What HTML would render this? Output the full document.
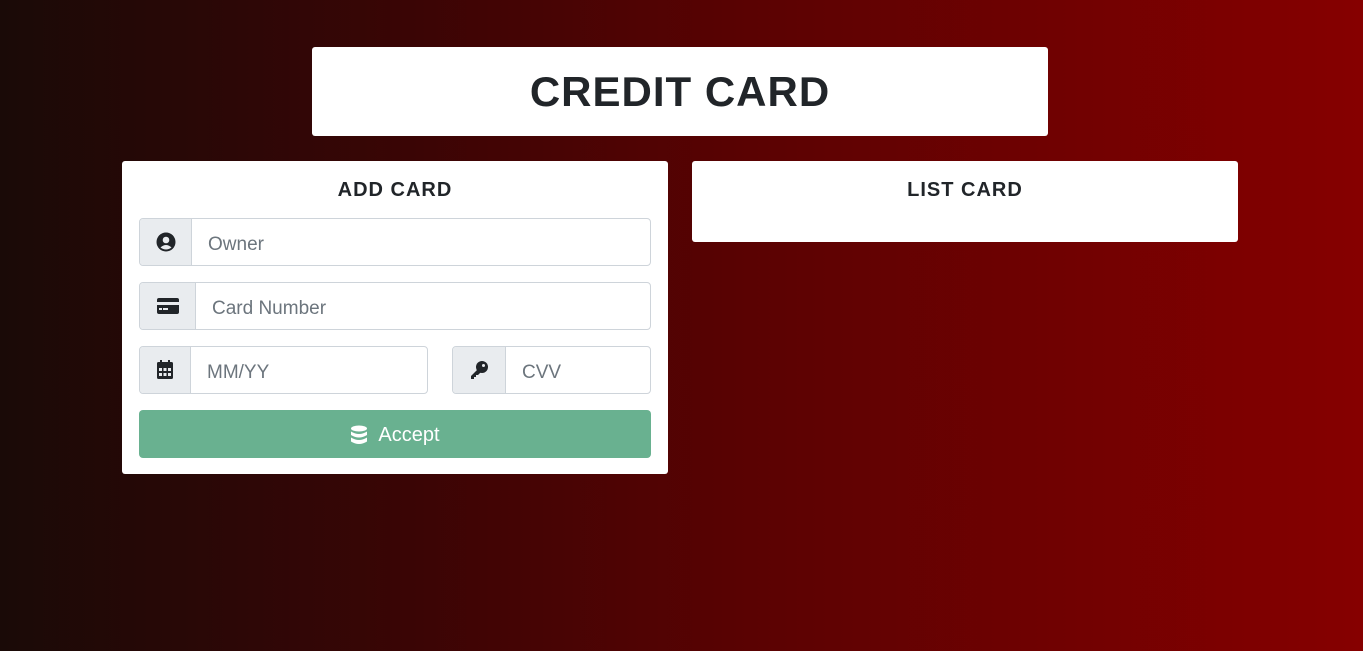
<!DOCTYPE html>
<html><head><style>
*{box-sizing:border-box;margin:0;padding:0}
body{width:1363px;height:651px;overflow:hidden;background:linear-gradient(to right,#1a0a07 0%,#3a0505 30%,#5a0202 55%,#860000 100%);font-family:"Liberation Sans",sans-serif;position:relative}
.box{position:absolute;background:#fff;border-radius:3px}
.h{font-weight:bold;color:#212529;text-align:center;text-transform:uppercase}
.ig{position:absolute;height:48px;border:1px solid #ced4da;border-radius:4px;display:flex;background:#fff;overflow:hidden}
.pre{background:#e9ecef;border-right:1px solid #ced4da;display:flex;align-items:center;justify-content:center;flex:none}
.ph{display:flex;align-items:center;padding-left:16px;padding-top:5px;color:#6c757d;font-size:19px}
</style></head><body>
<div class="box" style="left:312px;top:47px;width:736px;height:89px">
<div class="h" style="font-size:42px;letter-spacing:1px;line-height:89px">Credit Card</div></div>
<div class="box" style="left:122px;top:161px;width:546px;height:313px">
<div class="h" style="font-size:20px;letter-spacing:1px;margin-top:18px">Add Card</div></div>
<div class="box" style="left:692px;top:161px;width:546px;height:81px">
<div class="h" style="font-size:20px;letter-spacing:1px;margin-top:18px">List Card</div></div>

<div class="ig" style="left:139px;top:218px;width:512px"><div class="pre" style="width:52px">
<svg width="20" height="20" viewBox="0 0 20 20"><circle cx="10" cy="10" r="9.5" fill="#212529"/><circle cx="10" cy="8" r="3.3" fill="#e9ecef"/><path d="M4.5 15.5Q10 10.5 15.5 15.5Q10 19.5 4.5 15.5Z" fill="#e9ecef"/></svg></div><div class="ph">Owner</div></div>

<div class="ig" style="left:139px;top:282px;width:512px"><div class="pre" style="width:56px">
<svg width="24" height="18" viewBox="0 0 24 18"><rect x="1" y="1" width="22" height="16" rx="2" fill="#212529"/><rect x="1" y="5" width="22" height="3" fill="#e9ecef"/><rect x="3" y="11" width="3" height="2" fill="#e9ecef"/><rect x="7" y="11" width="5" height="2" fill="#e9ecef"/></svg></div><div class="ph">Card Number</div></div>

<div class="ig" style="left:139px;top:346px;width:289px"><div class="pre" style="width:51px">
<svg width="18" height="20" viewBox="0 0 18 20"><rect x="4" y="0" width="2" height="4" fill="#212529"/><rect x="12" y="0" width="2" height="4" fill="#212529"/><rect x="1" y="2" width="16" height="17" rx="1.5" fill="#212529"/><g fill="#e9ecef"><rect x="3" y="8" width="3" height="3"/><rect x="7.5" y="8" width="3" height="3"/><rect x="12" y="8" width="3" height="3"/><rect x="3" y="13" width="3" height="3"/><rect x="7.5" y="13" width="3" height="3"/><rect x="12" y="13" width="3" height="3"/></g></svg></div><div class="ph">MM/YY</div></div>

<div class="ig" style="left:452px;top:346px;width:199px"><div class="pre" style="width:53px">
<svg width="20" height="20" viewBox="0 0 20 20"><circle cx="13" cy="7" r="6" fill="#212529"/><circle cx="14.5" cy="5.5" r="1.5" fill="#e9ecef"/><path d="M9 9L2 16v3h3v-2h2v-2h2l3-3z" fill="#212529"/></svg></div><div class="ph">CVV</div></div>

<div style="position:absolute;left:139px;top:410px;width:512px;height:48px;background:#69b190;border-radius:4px;display:flex;align-items:center;justify-content:center;color:#fff;font-size:20px;padding-top:2px">
<svg width="18" height="20" viewBox="0 0 18 20" style="margin-right:10px"><g fill="#fff"><ellipse cx="9" cy="3.5" rx="8" ry="3"/><path d="M1 6.5q8 5 16 0v3.5q-8 5-16 0z"/><path d="M1 12.5q8 5 16 0v4q-8 5-16 0z"/></g></svg>Accept</div>
</body></html>
